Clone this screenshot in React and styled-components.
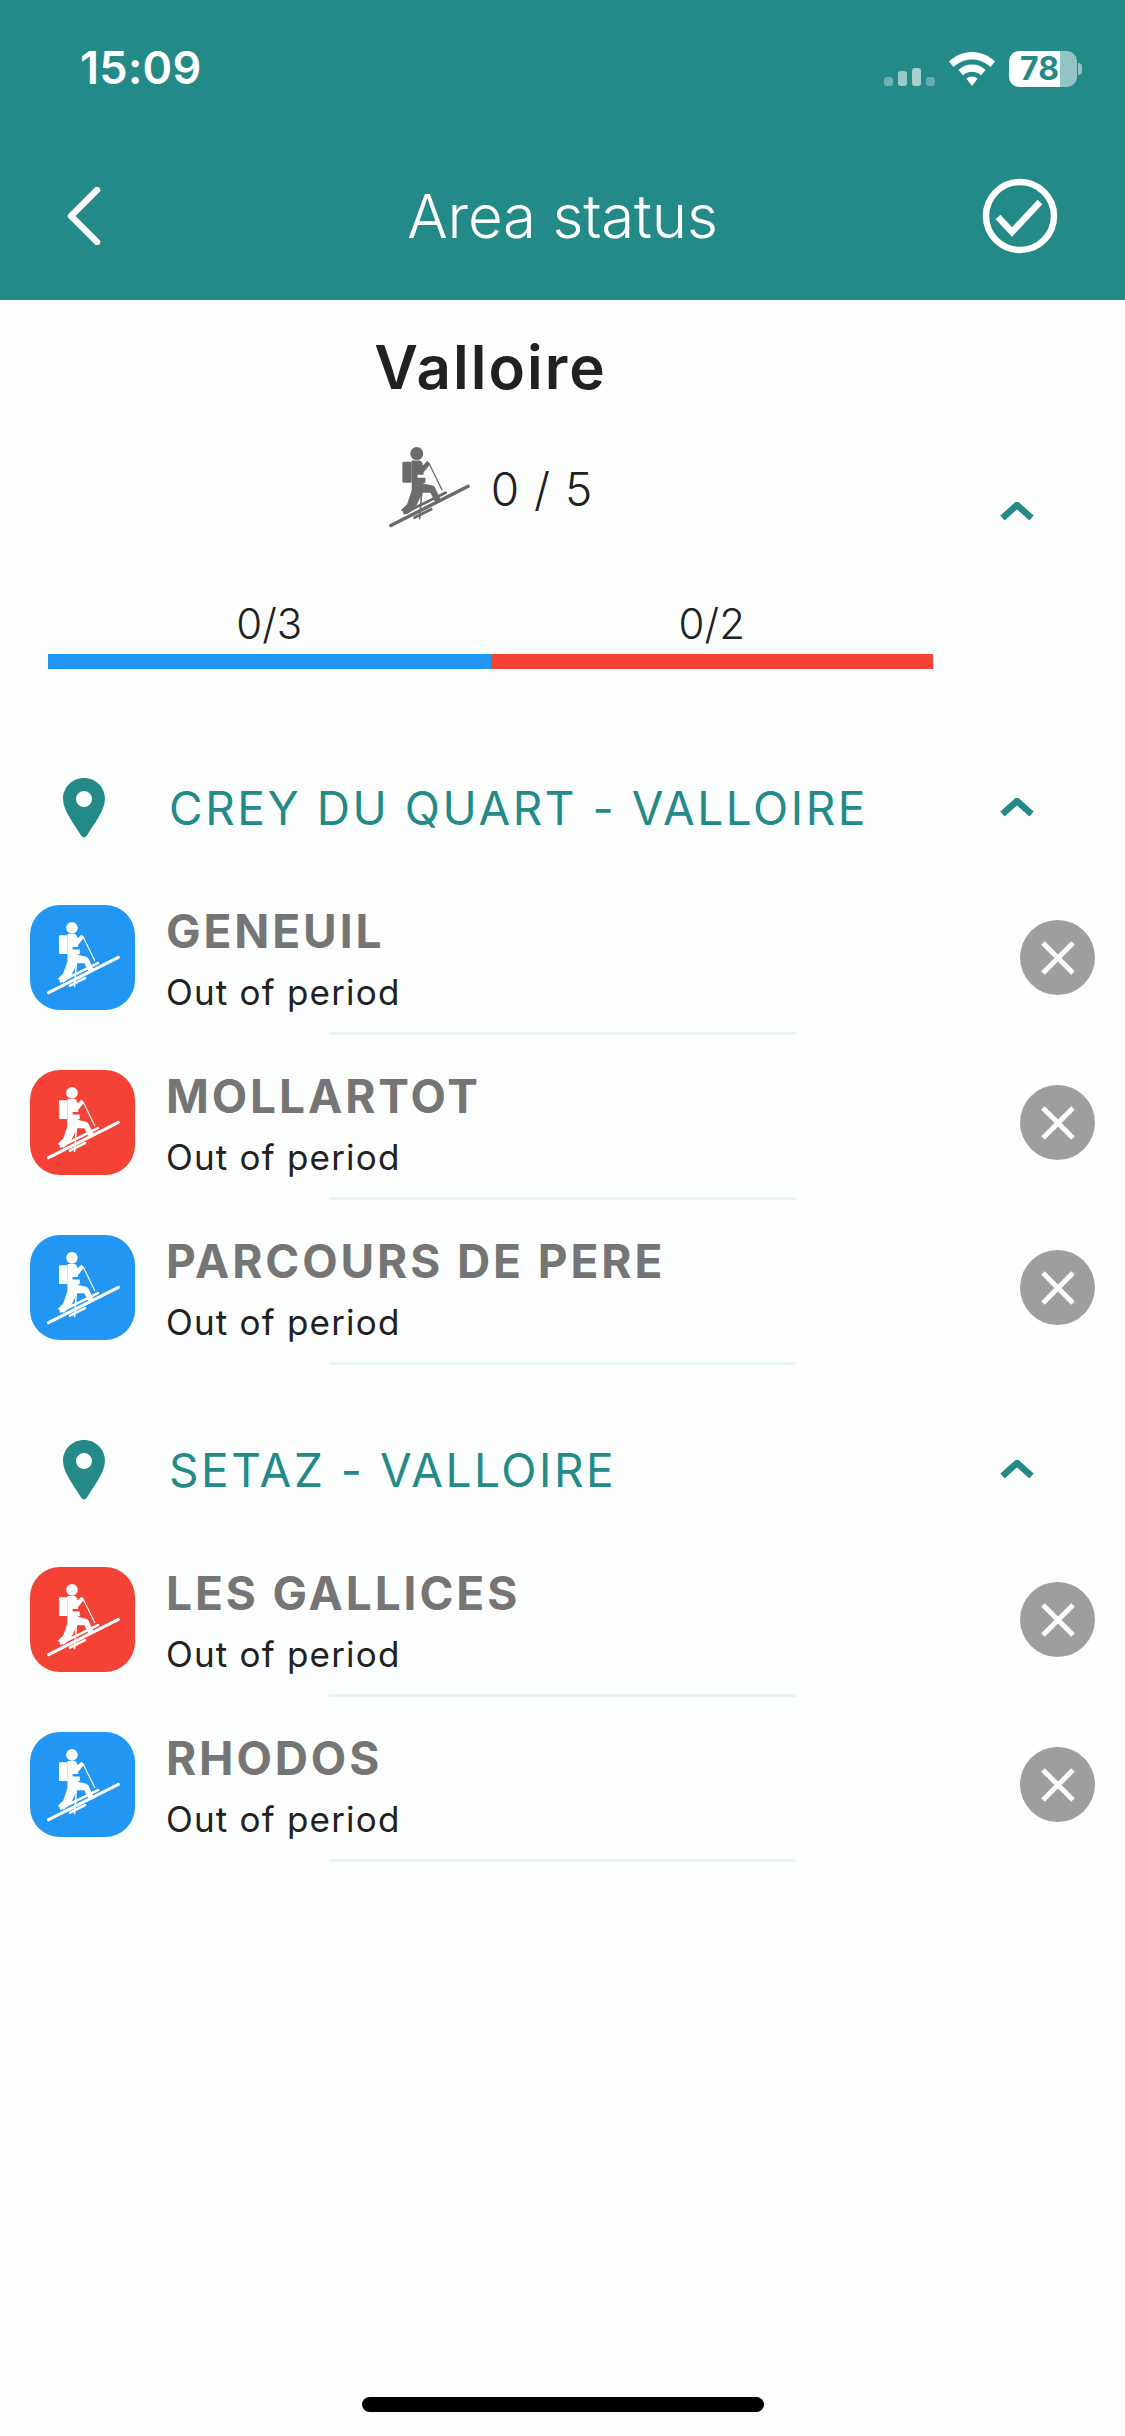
import React from "react";
import styled, { createGlobalStyle } from "styled-components";

const teal = "#248a87";
const blue = "#2196f3";
const red = "#f44336";

const Global = createGlobalStyle`
  html, body { margin: 0; padding: 0; background: #fcfefe; }
  * { box-sizing: border-box; }
  body { font-family: Inter, "Liberation Sans", sans-serif; }
`;

const Page = styled.div`
  position: relative;
  width: 1125px;
  height: 2436px;
  overflow: hidden;
  background: #fcfefe;
  display: flex;
  flex-direction: column;
`;
const Header = styled.header`
  height: 300px;
  background: ${teal};
  color: #fff;
  display: flex;
  flex-direction: column;
`;
const StatusBar = styled.div`
  height: 136px;
  padding: 46px 43px 0 80px;
  display: flex;
  justify-content: space-between;
  align-items: flex-start;
`;
const Time = styled.span`
  font-size: 45px;
  font-weight: 600;
  line-height: 44px;
  letter-spacing: 0.3px;
`;
const StatusIcons = styled.div`
  display: flex;
  align-items: center;
  gap: 14px;
  margin-top: 5px;
`;
const Signal = styled.div`
  display: flex;
  align-items: flex-end;
  gap: 4.5px;
  height: 34px;
`;
const SignalBar = styled.i`
  display: block;
  width: 9.5px;
  height: ${(p) => p.$h}px;
  border-radius: 3px;
  background: #fff;
  opacity: ${(p) => p.$o};
`;
const Battery = styled.div`
  position: relative;
  width: 68px;
  height: 36px;
  border-radius: 10px;
  background: linear-gradient(90deg, #fff 0, #fff 51px, rgba(255, 255, 255, 0.5) 51px);
  color: ${teal};
  font-size: 32px;
  font-weight: 700;
  line-height: 36px;
  padding-left: 11px;
`;
const BatteryWrap = styled.div`
  display: flex;
  align-items: center;
  gap: 1px;
`;
const BatteryNub = styled.i`
  display: block;
  width: 4px;
  height: 12px;
  border-radius: 0 4px 4px 0;
  background: rgba(255, 255, 255, 0.5);
`;
const NavBar = styled.div`
  flex: 1;
  margin-top: -4px;
  padding: 0 67px;
  display: grid;
  grid-template-columns: 1fr auto 1fr;
  align-items: center;
  & > svg:last-child {
    justify-self: end;
  }
`;
const NavTitle = styled.h1`
  margin: 0;
  font-size: 60px;
  font-weight: 300;
  line-height: 72px;
  letter-spacing: -0.2px;
`;

const Summary = styled.section`
  width: 981px;
  height: 471px;
  padding-top: 31px;
  display: flex;
  flex-direction: column;
  align-items: center;
  position: relative;
`;
const AreaName = styled.h2`
  margin: 0;
  width: 981px;
  text-align: center;
  font-size: 60px;
  font-weight: 600;
  line-height: 72px;
  letter-spacing: 2px;
  color: #212121;
`;
const Count = styled.div`
  margin-top: 44px;
  display: flex;
  align-items: center;
  gap: 21px;
  height: 80px;
  font-size: 46px;
  font-weight: 300;
  letter-spacing: 1px;
  color: #212121;
  & > span {
    padding-top: 3px;
  }
`;
const Progress = styled.div`
  margin-top: 72px;
  width: 885px;
  display: flex;
`;
const Segment = styled.div`
  flex: ${(p) => p.$n};
  display: flex;
  flex-direction: column;
  align-items: center;
  font-size: 42px;
  font-weight: 300;
  line-height: 50px;
  color: #212121;
  &::after {
    content: "";
    align-self: stretch;
    height: 15px;
    margin-top: 5px;
    background: ${(p) => p.$color};
  }
`;
const SummaryToggle = styled.div`
  position: absolute;
  left: 1000px;
  top: 202px;
`;

const Group = styled.section`
  display: flex;
  flex-direction: column;
  margin-bottom: 63px;
`;
const GroupHead = styled.div`
  height: 74px;
  padding: 0 91px 0 63px;
  display: flex;
  align-items: center;
  margin-bottom: 30px;
`;
const GroupTitle = styled.h3`
  flex: 1;
  margin: 0 0 0 64px;
  font-size: 46px;
  font-weight: 400;
  letter-spacing: 2.55px;
  color: ${teal};
`;
const Row = styled.div`
  position: relative;
  height: 165px;
  padding: 0 30px;
  display: flex;
  align-items: center;
`;
const Badge = styled.div`
  width: 105px;
  height: 105px;
  border-radius: 30px;
  background: ${(p) => p.$color};
  display: flex;
  align-items: center;
  justify-content: center;
  flex: none;
`;
const RowText = styled.div`
  flex: 1;
  margin-left: 31px;
  padding-top: 1px;
  display: flex;
  flex-direction: column;
`;
const RowTitle = styled.div`
  font-size: 46px;
  font-weight: 700;
  line-height: 56px;
  letter-spacing: 2.9px;
  color: #757575;
`;
const RowSub = styled.div`
  font-size: 35px;
  font-weight: 400;
  line-height: 44px;
  margin-top: 11px;
  letter-spacing: 1.2px;
  color: #212121;
`;
const Divider = styled.div`
  position: absolute;
  left: 329px;
  width: 467px;
  bottom: 5px;
  height: 3px;
  background: #e6f5f3;
`;
const Close = styled.div`
  width: 75px;
  height: 75px;
  border-radius: 50%;
  background: #9e9e9e;
  display: flex;
  align-items: center;
  justify-content: center;
`;
const HomeBar = styled.div`
  position: absolute;
  left: 362px;
  top: 2397px;
  width: 402px;
  height: 15px;
  border-radius: 8px;
  background: #000;
`;

function Skier({ color, size }) {
  return (
    <svg width={size} height={size} viewBox="72 66 228 228" fill="none">
      <circle cx="152" cy="87" r="18" fill={color} />
      <rect x="112" y="110" width="26" height="58" rx="3" fill={color} />
      <path
        d="M138 106 L160 106 Q168 108 169 120 L181 108 L190 116 L171 140 L171 146 L154 146 L154 154 L176 154 L176 168 L168 170 L196 176 Q203 178 205 186 L218 215 L204 224 L190 196 L168 196 L148 238 L126 256 L108 245 L125 228 L138 190 Z"
        fill={color}
      />
      <path d="M188 118 L222 188" stroke={color} strokeWidth="3.5" strokeLinecap="round" />
      <path d="M166 190 L160 268" stroke={color} strokeWidth="4.5" strokeLinecap="round" />
      <path d="M80 287 L295 178" stroke={color} strokeWidth="9.5" strokeLinecap="round" />
      <path d="M118 252 L232 196" stroke={color} strokeWidth="8" strokeLinecap="round" />
      <path d="M146 265 L192 242" stroke={color} strokeWidth="8" strokeLinecap="round" />
    </svg>
  );
}

function Chevron() {
  return (
    <svg width="34" height="20" viewBox="0 0 34 20" fill="none">
      <path d="M2.5 16 L17 3 L31.5 16" stroke={teal} strokeWidth="6.5" />
    </svg>
  );
}

function CloseX() {
  return (
    <svg width="36" height="36" viewBox="0 0 36 36" fill="none">
      <path d="M3 3 L33 33 M33 3 L3 33" stroke="#fff" strokeWidth="5" />
    </svg>
  );
}

function Pin() {
  return (
    <svg width="42" height="60" viewBox="0 0 42 60">
      <path
        d="M21 0 C9.4 0 0 9.2 0 20.8 C0 33 12 47 18 57.6 C19.4 60 22.6 60 24 57.6 C30 47 42 33 42 20.8 C42 9.2 32.6 0 21 0 Z M21 13 A8 8 0 1 1 21 29 A8 8 0 1 1 21 13 Z"
        fill={teal}
        fillRule="evenodd"
      />
    </svg>
  );
}

const groups = [
  {
    name: "CREY DU QUART - VALLOIRE",
    items: [
      ["GENEUIL", blue],
      ["MOLLARTOT", red],
      ["PARCOURS DE PERE", blue],
    ],
  },
  {
    name: "SETAZ - VALLOIRE",
    items: [
      ["LES GALLICES", red],
      ["RHODOS", blue],
    ],
  },
];

export default function App() {
  return (
    <Page>
      <Global />
      <Header>
        <StatusBar>
          <Time>15:09</Time>
          <StatusIcons>
            <Signal>
              <SignalBar $h={9} $o={0.35} />
              <SignalBar $h={15} $o={0.55} />
              <SignalBar $h={18} $o={0.6} />
              <SignalBar $h={9} $o={0.3} />
            </Signal>
            <svg width="46" height="34" viewBox="0 0 46 34">
              <path
                d="M23 0 C14 0 6.5 3.4 0 9.5 L4.5 15 C10 10 16 7.5 23 7.5 C30 7.5 36 10 41.5 15 L46 9.5 C39.5 3.4 32 0 23 0 Z M23 12.5 C18 12.5 13.5 14.3 9.5 18 L14 23.3 C16.5 21 19.5 19.8 23 19.8 C26.5 19.8 29.5 21 32 23.3 L36.5 18 C32.5 14.3 28 12.5 23 12.5 Z M23 24.5 C20.8 24.5 19 25.3 17.5 26.7 L23 34 L28.5 26.7 C27 25.3 25.2 24.5 23 24.5 Z"
                fill="#fff"
              />
            </svg>
            <BatteryWrap>
              <Battery>78</Battery>
              <BatteryNub />
            </BatteryWrap>
          </StatusIcons>
        </StatusBar>
        <NavBar>
          <svg width="34" height="58" viewBox="0 0 34 58" fill="none">
            <path d="M30 3 L4 29 L30 55" stroke="#fff" strokeWidth="6.5" strokeLinecap="round" strokeLinejoin="round" />
          </svg>
          <NavTitle>Area status</NavTitle>
          <svg width="76" height="76" viewBox="0 0 76 76" fill="none">
            <circle cx="38" cy="38" r="34" stroke="#fff" strokeWidth="6.5" />
            <path d="M16 39 L30 54 L58 24" stroke="#fff" strokeWidth="6.5" />
          </svg>
        </NavBar>
      </Header>

      <Summary>
        <AreaName>Valloire</AreaName>
        <Count>
          <Skier color="#6b6b6b" size={82} />
          <span>0 / 5</span>
        </Count>
        <Progress>
          <Segment $n={3} $color={blue}>0/3</Segment>
          <Segment $n={3} $color={red}>0/2</Segment>
        </Progress>
        <SummaryToggle>
          <Chevron />
        </SummaryToggle>
      </Summary>

      {groups.map((g) => (
        <Group key={g.name}>
          <GroupHead>
            <Pin />
            <GroupTitle>{g.name}</GroupTitle>
            <Chevron />
          </GroupHead>
          {g.items.map(([name, color]) => (
            <Row key={name}>
              <Badge $color={color}>
                <Skier color="#fff" size={74} />
              </Badge>
              <RowText>
                <RowTitle>{name}</RowTitle>
                <RowSub>Out of period</RowSub>
              </RowText>
              <Close>
                <CloseX />
              </Close>
              <Divider />
            </Row>
          ))}
        </Group>
      ))}
      <HomeBar />
    </Page>
  );
}
